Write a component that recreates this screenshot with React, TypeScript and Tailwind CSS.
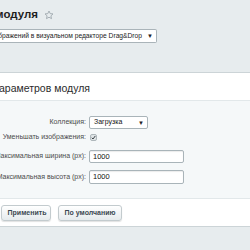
import React from "react"

function Star() {
  return (
    <svg width="10" height="10" viewBox="0 0 24 24" fill="none" stroke="#9aa4a9" strokeWidth="2" strokeLinejoin="round">
      <path d="M12 2.5l2.9 6.2 6.7.7-5 4.6 1.4 6.7L12 17.3l-6 3.4 1.4-6.7-5-4.6 6.7-.7z" />
    </svg>
  )
}

function Arrow() {
  return <span className="text-[6px] text-[#222] leading-none">▼</span>
}

function Row({ label, children, className }: { label: string; children: React.ReactNode; className: string }) {
  return (
    <div className={`flex items-center ${className}`}>
      <div className="w-[86px] shrink-0 flex justify-end whitespace-nowrap text-[7px] text-[#4b4b4b]">{label}</div>
      <div className="ml-[3px] flex items-center">{children}</div>
    </div>
  )
}

function TextInput({ value, h }: { value: string; h: string }) {
  return (
    <div className={`w-[95px] ${h} bg-white border border-[#a9b4b9] rounded-[2px] shadow-[inset_0_1px_1px_rgba(0,0,0,0.08)] flex items-center pl-[3px] text-[7.5px] text-[#111]`}>
      {value}
    </div>
  )
}

export default function App() {
  return (
    <div className="w-[250px] h-[250px] overflow-hidden bg-[#e7ecee] font-['Liberation_Sans',Arial,sans-serif]">
      <div className="h-[72px] flex flex-col">
        <div className="mt-[9px] h-[12px] flex items-center">
          <div className="w-[38px] flex justify-end whitespace-nowrap text-[11.5px] font-bold text-[#1f1f1f]">
            Настройки модуля
          </div>
          <div className="ml-[6px] flex items-center">
            <Star />
          </div>
        </div>
        <div className="mt-[8px] w-[157px] h-[14px] bg-white border border-l-0 border-[#aab4b9] rounded-r-[2px] flex items-center justify-end pr-[3px] overflow-hidden">
          <span className="whitespace-nowrap text-[6.7px] text-[#222]">
            Параметры изображений в визуальном редакторе Drag&amp;Drop
          </span>
          <span className="ml-[5px] flex items-center">
            <Arrow />
          </span>
        </div>
      </div>

      <div className="bg-white border-y border-[#ccd4d7]">
        <div className="h-[28px] flex items-center pt-[4px] border-b border-[#e2e8ea]">
          <div className="w-[90px] flex justify-end whitespace-nowrap text-[10.5px] text-[#2b2b2b]">
            Настройка параметров модуля
          </div>
        </div>

        <div className="bg-[#f5f8f9] pt-[15px] pb-[14px] border-b border-[#e2e8ea]">
          <Row label="Коллекция:" className="h-[13px]">
            <div className="w-[59px] h-[13px] bg-white border border-[#a9b4b9] rounded-[2px] flex items-center justify-between pl-[4px] pr-[3px]">
              <span className="text-[7px] text-[#111]">Загрузка</span>
              <Arrow />
            </div>
          </Row>
          <Row label="Уменьшать изображения:" className="h-[11px] mt-[3px]">
            <div className="ml-[1px] w-[7px] h-[7px] rounded-[2px] bg-[#dfe4e6] border border-[#aeb7bb] flex items-center justify-center">
              <svg width="5" height="5" viewBox="0 0 10 10" fill="none" stroke="#3d4448" strokeWidth="2">
                <path d="M1.5 5.5l2.5 2.5 4.5-6" />
              </svg>
            </div>
          </Row>
          <Row label="Максимальная ширина (px):" className="h-[13px] mt-[7px]">
            <TextInput value="1000" h="h-[13px]" />
          </Row>
          <Row label="Максимальная высота (px):" className="h-[14px] mt-[7px]">
            <TextInput value="1000" h="h-[14px]" />
          </Row>
        </div>

        <div className="h-[27px] flex items-center pt-[1px]">
          <button className="ml-[1px] w-[50px] h-[16px] rounded-[3px] border border-[#c3cbce] bg-gradient-to-b from-white to-[#e6ebed] shadow-[0_1px_1px_rgba(0,0,0,0.12)] text-[7px] font-bold text-[#3c4a52] flex items-center justify-center pl-[2px]">
            Применить
          </button>
          <button className="ml-[7px] w-[64px] h-[16px] rounded-[3px] border border-[#c3cbce] bg-gradient-to-b from-white to-[#e6ebed] shadow-[0_1px_1px_rgba(0,0,0,0.12)] text-[7px] font-bold text-[#3c4a52] flex items-center justify-center">
            По умолчанию
          </button>
        </div>
      </div>
    </div>
  )
}
